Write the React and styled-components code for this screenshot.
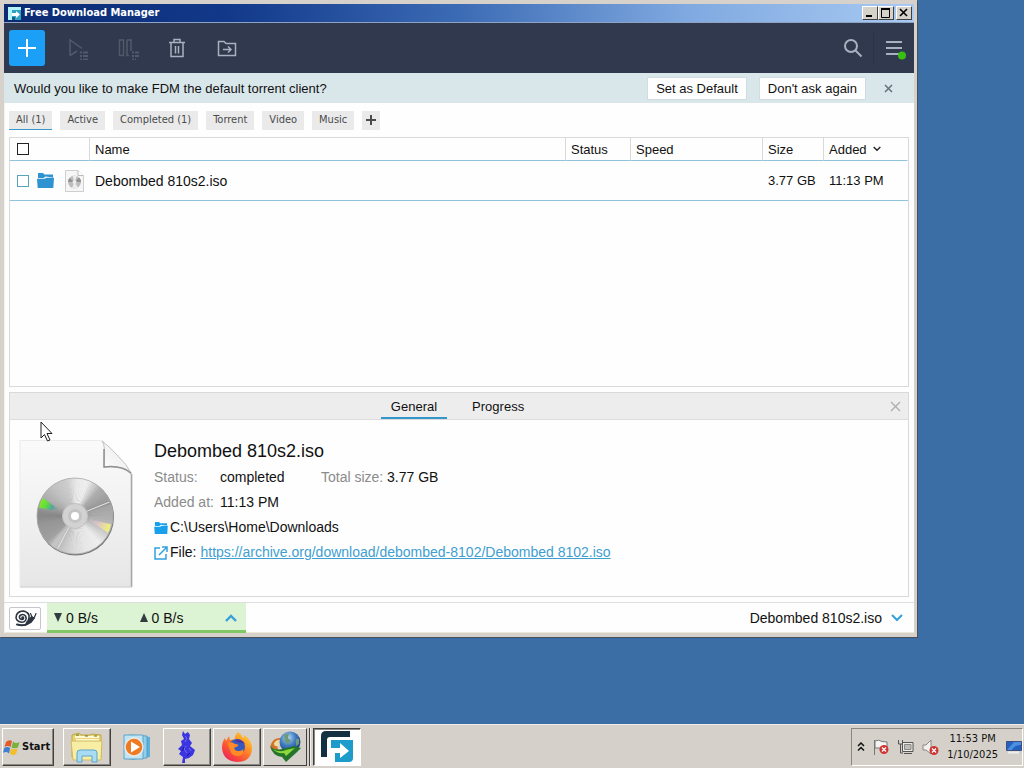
import React from "react";
import styled, { createGlobalStyle, css } from "styled-components";

const UI = `"Liberation Sans", Arial, sans-serif`;
const SYS = `"DejaVu Sans Condensed", "DejaVu Sans", Tahoma, sans-serif`;

const Global = createGlobalStyle`
  * { box-sizing: border-box; }
  body { margin: 0; font-family: ${UI}; font-size: 14px; color: #111; }
  button { font: inherit; color: inherit; margin: 0; padding: 0; border: 0; background: none; }
  svg { display: block; flex: none; }
`;

/* ---------- desktop and window frame ---------- */

const Desktop = styled.div`
  position: relative;
  min-height: 100vh;
  display: flex;
  flex-direction: column;
  background: #3a6ea5;
`;
const Workspace = styled.main`
  flex: 1;
  display: flex;
  padding: 0 107px 87px 0;
`;
const Window = styled.section`
  flex: 1;
  min-width: 0;
  display: flex;
  flex-direction: column;
  background: #fefefe;
  border: solid #d6d2cb;
  border-width: 4px 3px 4px 4px;
  box-shadow: inset 1px 0 0 #f4f2ee, inset 0 -1px 0 #ece9d8, 1px 1px 0 #4a4f5a;
`;
const TitleBar = styled.header`
  display: flex;
  align-items: center;
  height: 19px;
  padding: 0 2px 0 4px;
  gap: 3px;
  border-bottom: 1px solid #8fa3c4;
  background: linear-gradient(90deg, #0b2a72 0%, #12398a 25%, #3c6bb5 50%, #7fa9e0 75%, #a8c9f2 100%);
  color: #fff;
  font: bold 11px/18px ${SYS};
`;
const Title = styled.h1`
  flex: 1;
  margin: 0;
  font: inherit;
`;
const WinButtons = styled.div`
  display: flex;
`;
const WinButton = styled.button`
  width: 16px;
  height: 14px;
  display: grid;
  place-items: center;
  background: #d6d2ca;
  border: 1px solid;
  border-color: #fff #404040 #404040 #fff;
  margin-left: ${(p) => (p.$apart ? 2 : 0)}px;
`;

/* ---------- toolbar ---------- */

const Toolbar = styled.nav`
  display: flex;
  align-items: center;
  gap: 14px;
  height: 50px;
  padding: 0 2px 0 5px;
  background: #30394d;
  color: #a9b0bf;
`;
const ToolButton = styled.button`
  width: 36px;
  height: 36px;
  display: grid;
  place-items: center;
  border-radius: 3px;
  ${(p) => p.$primary && css`background: #1c9ff7; color: #fff;`}
  ${(p) => p.$off && css`color: #515a6c;`}
`;
const Spacer = styled.div`
  flex: 1;
`;
const MenuGroup = styled.div`
  display: flex;
  align-items: center;
  gap: 2px;
`;
const Divider = styled.div`
  width: 1px;
  height: 32px;
  background: #2b3447;
`;

/* ---------- notice ---------- */

const Notice = styled.div`
  display: flex;
  align-items: center;
  gap: 12px;
  height: 30px;
  padding: 0 16px 0 10px;
  background: #d9e7eb;
`;
const NoticeText = styled.span`
  flex: 1;
  font-size: 13px;
`;
const NoticeButton = styled.button`
  height: 23px;
  padding: 0 8px;
  background: #fefefe;
  border: 1px solid #cfdde1;
  font-size: 13px;
`;
const CloseButton = styled.button`
  width: 20px;
  height: 20px;
  display: grid;
  place-items: center;
  color: ${(p) => p.$tone};
`;

/* ---------- filters ---------- */

const Body = styled.div`
  flex: 1;
  display: flex;
  flex-direction: column;
  padding: 0 5px;
`;
const Filters = styled.div`
  display: flex;
  gap: 8px;
  height: 34px;
  padding-top: 8px;
`;
const Chip = styled.button`
  height: 19px;
  padding: 0 7px;
  background: #eaeaea;
  color: #4a4a4a;
  font: 11px/18px ${SYS};
  border-bottom: 1px solid ${(p) => (p.$active ? "#3a97cc" : "#eaeaea")};
`;
const AddChip = styled(Chip)`
  width: 18px;
  padding: 0;
  display: grid;
  place-items: center;
`;

/* ---------- list ---------- */

const ListBox = styled.div`
  flex: 1;
  border: 1px solid #d9d9d9;
`;
const Table = styled.table`
  width: 100%;
  table-layout: fixed;
  border-collapse: separate;
  border-spacing: 0;
  font-size: 13px;
`;
const Col = styled.col`
  width: ${(p) => p.$w};
`;
const Th = styled.th`
  height: 23px;
  padding: 0 0 0 5px;
  font-weight: normal;
  text-align: left;
  border-right: 1px solid ${(p) => (p.$last ? "transparent" : "#d9d9d9")};
  border-bottom: 1px solid #8fc4dc;
`;
const Td = styled.td`
  height: 40px;
  padding: 0 0 0 5px;
  border-bottom: 1px solid #8fc4dc;
  ${(p) => p.$name && css`font-size: 14px;`}
`;
const CellFlex = styled.div`
  display: flex;
  align-items: center;
  gap: ${(p) => p.$gap || 0}px;
  padding-left: ${(p) => (p.$lead ? 2 : 0)}px;
`;
const IconPair = styled.span`
  display: flex;
  align-items: center;
  gap: 11px;
`;
const Check = styled.input`
  appearance: none;
  width: 12px;
  height: 12px;
  margin: 0;
  background: #fff;
  border: 1px solid ${(p) => p.$tone};
`;

/* ---------- details ---------- */

const Details = styled.section`
  margin: 5px 0;
  border: 1px solid #d9d9d9;
`;
const Tabs = styled.div`
  display: grid;
  grid-template-columns: 1fr auto 1fr;
  align-items: center;
  height: 27px;
  padding-right: 3px;
  background: #ededed;
  border-bottom: 1px solid #dcdcdc;
`;
const TabList = styled.div`
  grid-column: 2;
  display: flex;
  gap: 15px;
`;
const Tab = styled.button`
  height: 26px;
  padding: 2px 10px 0;
  font-size: 13px;
  border-bottom: 2px solid ${(p) => (p.$active ? "#3496cb" : "transparent")};
`;
const TabEnd = styled.div`
  display: flex;
  justify-content: flex-end;
`;
const DetailBody = styled.div`
  display: flex;
  gap: 21px;
  padding: 20px 9px 8px;
`;
const Heading = styled.h2`
  margin: 0 0 3px;
  font-size: 18px;
  line-height: 22px;
  font-weight: normal;
`;
const Facts = styled.dl`
  display: grid;
  grid-template-columns: 66px 101px 66px auto;
  margin: 0;
  line-height: 25px;
  white-space: nowrap;
`;
const Term = styled.dt`
  color: #8b8b8b;
`;
const Value = styled.dd`
  margin: 0;
`;
const Line = styled.p`
  display: flex;
  align-items: center;
  gap: 2px;
  margin: 0;
  line-height: 25px;
`;
const FileLink = styled.a`
  margin-left: 2px;
  color: #3f9fd0;
`;

/* ---------- status bar ---------- */

const StatusBar = styled.footer`
  display: flex;
  align-items: center;
  height: 31px;
  padding: 0 11px 0 5px;
  gap: 6px;
  border-top: 1px solid #dedede;
`;
const SnailButton = styled.button`
  width: 32px;
  height: 23px;
  display: grid;
  place-items: center;
  border: 1px solid #c4c6cc;
  border-radius: 2px;
`;
const SpeedBox = styled.div`
  display: flex;
  align-items: center;
  width: 199px;
  height: 30px;
  padding: 2px 9px 0 7px;
  background: #dcf3d4;
  border-bottom: 3px solid #80c866;
`;
const Speed = styled.span`
  display: flex;
  align-items: center;
  gap: 4px;
  width: 87px;
`;
const CurrentFile = styled.button`
  display: flex;
  align-items: center;
  gap: 9px;
`;

/* ---------- taskbar ---------- */

const Taskbar = styled.footer`
  display: flex;
  align-items: center;
  height: 44px;
  padding: 1px 1px 0 2px;
  background: #d5d1ca;
  border-top: 1px solid #efede8;
  font: 11px/16px ${SYS};
`;
const TaskItem = styled.button`
  width: 48px;
  height: 38px;
  display: grid;
  place-items: center;
  margin-right: 2px;
  border: 1px solid transparent;
  ${(p) =>
    p.$state === "open" &&
    css`
      border-color: #fff #404040 #404040 #fff;
      box-shadow: inset -1px -1px 0 #8a8780;
    `}
  ${(p) =>
    p.$state === "stack" &&
    css`
      width: 44px;
      margin-right: 6px;
      border-color: #fff #404040 #404040 #fff;
      box-shadow: 2px 0 0 #d5d1ca, 3px 0 0 #404040, 4px 0 0 #f4f2ee;
    `}
  ${(p) =>
    p.$state === "current" &&
    css`
      background: #fefefe;
      border-color: #404040 #fff #fff #404040;
      box-shadow: inset 1px 1px 0 #8a8780;
    `}
`;
const StartButton = styled(TaskItem)`
  width: 52px;
  margin-right: 9px;
  display: flex;
  align-items: center;
  gap: 2px;
  font-weight: bold;
`;
const Tray = styled.div`
  display: flex;
  align-items: center;
  height: 38px;
  padding: 0 0 0 5px;
  gap: 8px;
  border: 1px solid;
  border-color: #8a8780 #fff #fff #8a8780;
`;
const Clock = styled.time`
  text-align: center;
`;
const Pointer = styled.svg`
  position: absolute;
  left: 40px;
  top: 421px;
`;

/* ---------- drawings ---------- */

const discStops = [
  [0, 232], [18, 240], [40, 175], [68, 150], [72, 165], [95, 178], [115, 200],
  [135, 238], [160, 232], [185, 214], [205, 190], [215, 200], [225, 160],
  [255, 150], [270, 135], [300, 176], [325, 196], [345, 205], [360, 232],
];
const shade = (a) => {
  const i = discStops.findIndex((s) => s[0] > a);
  const [a0, v0] = discStops[i - 1];
  const [a1, v1] = discStops[i];
  return Math.round(v0 + ((v1 - v0) * (a - a0)) / (a1 - a0));
};
const rim = (a, r) => {
  const t = ((a - 90) * Math.PI) / 180;
  return `${(56 + r * Math.cos(t)).toFixed(2)} ${(76 + r * Math.sin(t)).toFixed(2)}`;
};
const wedges = Array.from({ length: 90 }, (_, k) => {
  const v = shade(k * 4);
  return { k, d: `M56 76L${rim(k * 4, 38)}A38 38 0 0 1 ${rim(k * 4 + 5, 38)}Z`, fill: `rgb(${v},${v},${v})` };
});

function DiscFile({ width, height, id }) {
  return (
    <svg width={width} height={height} viewBox="0 0 114 148" aria-hidden="true">
      <defs>
        <linearGradient id={id + "p"} x1="0" y1="0" x2="0" y2="1">
          <stop offset="0" stopColor="#fafafa" />
          <stop offset="0.5" stopColor="#f1f1f1" />
          <stop offset="1" stopColor="#e6e6e6" />
        </linearGradient>
        <linearGradient id={id + "f"} x1="0" y1="1" x2="1" y2="0">
          <stop offset="0" stopColor="#fff" />
          <stop offset="0.6" stopColor="#f0f0f0" />
          <stop offset="1" stopColor="#c4c4c4" />
        </linearGradient>
        <linearGradient id={id + "g"} x1="0" y1="0" x2="1" y2="0.3">
          <stop offset="0" stopColor="#8df01c" />
          <stop offset="0.4" stopColor="#62dd3a" />
          <stop offset="0.7" stopColor="#4fa6a0" />
          <stop offset="1" stopColor="#9a9a9a" stopOpacity="0" />
        </linearGradient>
        <linearGradient id={id + "y"} x1="0" y1="0" x2="1" y2="0.3">
          <stop offset="0" stopColor="#c8c4c4" stopOpacity="0" />
          <stop offset="0.5" stopColor="#dfc5c8" />
          <stop offset="1" stopColor="#eeee80" />
        </linearGradient>
      </defs>
      <path d="M1 .5H82Q86 1 86 6L86 27H106Q113 29 113 37V147H1Z" fill={`url(#${id}p)`} stroke="#ebebeb" />
      <path d="M112.500 34V147" stroke="#a6a6a6" strokeWidth="1.500" />
      <path d="M1 147H113" stroke="#cfcfcf" />
      <path d="M83 1Q87 5 85 27Q104 25 113 35Q108 24 99 16Q90 6 83 1Z" fill={`url(#${id}f)`} stroke="#b5b5b5" strokeWidth=".8" />
      <path d="M85 9V27Q103 25 112 33" fill="none" stroke="#909090" strokeWidth="1.500" />
      <circle cx="56.500" cy="77" r="38.500" fill="#777" />
      {wedges.map((w) => <path key={w.k} d={w.d} fill={w.fill} />)}
      <path d={`M${rim(288, 13)}L${rim(283, 37)}A37 37 0 0 1 ${rim(299, 37)}Z`} fill={`url(#${id}g)`} />
      <path d={`M${rim(104, 13)}L${rim(103, 37)}A37 37 0 0 1 ${rim(117, 37)}Z`} fill={`url(#${id}y)`} />
      <path d={`M56 76L${rim(68, 37)}M56 76L${rim(208, 37)}`} stroke="#e6e6e6" />
      <circle cx="56" cy="76" r="38" fill="none" stroke="#aaa" strokeWidth=".8" />
      <circle cx="56" cy="76" r="12.500" fill="#d2d2d2" stroke="#c2c2c2" />
      <circle cx="56" cy="76" r="7" fill="#c4c4c4" />
      <circle cx="56" cy="76" r="4" fill="#fff" />
    </svg>
  );
}

function SmallDisc() {
  return (
    <svg width="19" height="22" viewBox="0 0 19 22" aria-hidden="true">
      <path d="M.5.500H13L18.500 6V21.500H.500Z" fill="#f6f6f6" stroke="#cfcfcf" />
      <path d="M13 .500V5.500H18.500" fill="#fff" stroke="#bbb" />
      <circle cx="9.500" cy="12" r="6.500" fill="#bdbdbd" />
      <path d="M9.500 12L7.500 5.800A6.500 6.500 0 0 1 12 6ZM9.500 12L13 17.500A6.500 6.500 0 0 1 7 18Z" fill="#ececec" />
      <path d="M9.500 12L3 12A6.500 6.500 0 0 1 4.500 8ZM9.500 12L16 12A6.500 6.500 0 0 0 14 7.500Z" fill="#929292" />
      <circle cx="9.500" cy="12" r="2" fill="#eee" />
    </svg>
  );
}

function Folder({ width, height, color }) {
  return (
    <svg width={width} height={height} viewBox="0 0 17 15" aria-hidden="true">
      <path d="M1 0H6L7.500 1.500H16V4.500L8.500 3.500L6.500 5H1Z" fill={color} />
      <path d="M0 5.800H7.500L9.500 4.700H17L16.300 15H.700Z" fill={color} />
    </svg>
  );
}

const Stroke = ({ size = 20, w = 1.5, children, ...rest }) => (
  <svg width={size} height={size} viewBox={`0 0 ${size} ${size}`} fill="none" stroke="currentColor" strokeWidth={w} aria-hidden="true" {...rest}>
    {children}
  </svg>
);

const PlusIcon = () => <Stroke w={2}><path d="M10 1V19M1 10H19" /></Stroke>;
const StartAll = () => (
  <Stroke size={24}>
    <path d="M5 19.500V4L17 12.500M5 19.500L12 15" />
    <path d="M15 16.500H23M15 20H23M15 23.500H23" strokeWidth="2" strokeDasharray="2 1 5" />
  </Stroke>
);
const PauseAll = () => (
  <Stroke size={24}>
    <path d="M4.500 4H8.500V19.500H4.500ZM12 4H16V15M12 4V19.500H14" />
    <path d="M17 16.500H24M17 20H24M17 23.500H21" strokeWidth="2" strokeDasharray="2 1 4" />
  </Stroke>
);
const Trash = () => (
  <Stroke>
    <path d="M2 4.500H18M7 4V1.500H13V4M4 5V18.500H16V5M8.500 8V15.500M11.500 8V15.500" />
  </Stroke>
);
const MoveFolder = () => (
  <Stroke>
    <path d="M1.500 17.500V3.500H7L9 5.500H18.500V17.500ZM6 11.500H13M11 8.500L14 11.500L11 14.500" />
  </Stroke>
);
const Search = () => <Stroke w={2}><circle cx="8" cy="8" r="6" /><path d="M12.500 12.500L18.500 18.500" /></Stroke>;
const Menu = () => (
  <Stroke size={24} w={2}>
    <path d="M4 6H20M4 12H20M4 18H17" />
    <circle cx="20" cy="19.500" r="4" fill="#38bf12" stroke="none" />
  </Stroke>
);
const Cross = ({ size, w }) => <Stroke size={size} w={w}><path d={`M1 1L${size - 1} ${size - 1}M${size - 1} 1L1 ${size - 1}`} /></Stroke>;
const Chevron = ({ up, size = 12, w = 2, color = "#35a0dc" }) => (
  <svg width={size} height={size} viewBox="0 0 12 12" fill="none" stroke={color} strokeWidth={w} aria-hidden="true">
    <path d={up ? "M1 9L6 4L11 9" : "M1 3L6 8L11 3"} />
  </svg>
);
const Triangle = ({ up }) => (
  <svg width="8" height="9" viewBox="0 0 8 9" aria-hidden="true">
    <path d={up ? "M0 9H8L4 0Z" : "M0 0H8L4 9Z"} fill="#333d40" />
  </svg>
);
const External = () => (
  <Stroke size={14} color="#2fa2df">
    <path d="M6 2H1V13H12V8M8 1H13V6M13 1L5 9" />
  </Stroke>
);
const Snail = () => (
  <svg width="24" height="18" viewBox="0 0 24 18" fill="none" stroke="#2b3440" strokeWidth="1.600" strokeLinecap="round" aria-hidden="true">
    <path d="M9 9C9 7.500 11 8 10.500 9.500C10 11 7 11 6.500 8.500C6 5.500 10.500 4.500 12.500 7C14.500 10 12 13.500 8.500 13.300C4.500 13 2 10 3.500 6C5 2 11 1 14 3.500C16 5 16.500 8 15.500 10.500" />
    <path d="M4 15.500C8 16.500 12 16.500 15 14.500C18 12.500 18.500 10 20.500 9" strokeWidth="2" />
    <path d="M14 13L18.500 8L21 9L18 13L13 15.500Z" fill="#2b3440" />
    <path d="M19 8L17.500 4.500M21.500 8L23 4.500" strokeWidth="1.200" />
  </svg>
);
const FdmLogo = () => (
  <svg width="32" height="32" viewBox="0 0 32 32" aria-hidden="true">
    <path d="M5 0H29V6H9Q6 6 6 9V26H0V5Q0 0 5 0Z" fill="#12303f" />
    <path d="M10 9H32V27Q32 31 28 31H10Z" fill="#1d9ccc" />
    <path d="M10 17H19V12L28 20L19 27V22H14V31H10Z" fill="#fff" />
  </svg>
);
const TitleLogo = () => (
  <svg width="13" height="13" viewBox="0 0 13 13" aria-hidden="true">
    <path d="M0 0H13V13H0Z" fill="#2fa3c4" />
    <path d="M0 0H13V3H4V13H0Z" fill="#b5f3fa" />
    <path d="M4 6H8V4L12 7.500L8 11V9H4Z" fill="#fff" />
    <path d="M4 10H7V13H4Z" fill="#145d86" />
  </svg>
);
const WinFlag = () => (
  <svg width="17" height="17" viewBox="0 0 17 17" aria-hidden="true">
    <path d="M3 3Q6 0 9 2L7.500 8Q5 6 1.500 8Z" fill="#e2592c" />
    <path d="M10 2.500Q12 5 16.500 3L15 8.500Q11 10 8.500 8.300Z" fill="#79b13c" />
    <path d="M1.200 9Q4 7 7.200 9L6 14.500Q3 12 0 14Z" fill="#3f7fd0" />
    <path d="M8 9.500Q11 11 14.700 9.500L13 15Q9 17 6.800 14.500Z" fill="#f3bd2c" />
  </svg>
);
const ExplorerIcon = () => (
  <svg width="34" height="32" viewBox="0 0 34 32" aria-hidden="true">
    <path d="M2 4L9 2L11 4H20L22 3L31 4V26H2Z" fill="#e9d374" stroke="#c0a545" />
    <path d="M5 6H29M6 9H29" stroke="#fff8d0" strokeWidth="2" />
    <path d="M1 10H32L31 29H3Z" fill="#f7eda5" stroke="#d2bb5c" />
    <path d="M7 31V22Q7 19 10 19H24Q27 19 27 22V31H22V25H12V31Z" fill="#a9dcf2" stroke="#5aa6cf" />
    <path d="M6 4H9M15 5H18M24 5H27" stroke="#4b7a3a" />
  </svg>
);
const PlayerIcon = () => (
  <svg width="30" height="28" viewBox="0 0 30 28" aria-hidden="true">
    <path d="M10 2L28 4V24L10 27Z" fill="#5fb0da" />
    <path d="M7 2L25 3V25L7 26Z" fill="#93cfea" stroke="#3f8dbd" strokeWidth=".7" />
    <path d="M2 2H21V26H2Z" fill="#c2e4f2" stroke="#58a4cb" />
    <circle cx="12" cy="14" r="9" fill="#ee7a22" stroke="#e8e8e8" strokeWidth="1.500" />
    <path d="M9 8.500L18 14L9 19.500Z" fill="#fff" />
  </svg>
);
const SpriteIcon = () => (
  <svg width="20" height="32" viewBox="0 0 20 32" aria-hidden="true">
    <path d="M6 0L8 3L11 1L13 4L12 8L15 12L13 15L18 19L16 24L12 27L8 28V32H5L6 26L2 23L4 20L1 18L5 14L4 10L7 8L5 4Z" fill="#3a35e0" />
    <path d="M8 5L10 7L8 11M9 15L7 18L10 22M12 17L14 20" stroke="#7370f0" fill="none" />
    <path d="M7 16L5 20M13 22L10 25" stroke="#1a158e" fill="none" />
  </svg>
);
const FirefoxIcon = () => (
  <svg width="32" height="32" viewBox="0 0 32 32" aria-hidden="true">
    <defs>
      <linearGradient id="fx" x1="1" y1="0" x2="0.200" y2="1">
        <stop offset="0" stopColor="#ffe13a" />
        <stop offset="0.400" stopColor="#ff9524" />
        <stop offset="0.750" stopColor="#fb4b38" />
        <stop offset="1" stopColor="#e62263" />
      </linearGradient>
    </defs>
    <path d="M17 1Q21 4 22 7Q24 6 23 4Q31 9 31 18Q30 31 16 31Q2 30 1 17Q1 11 4 7L5 10L8 5L9 9Q12 8 14 9Q13 5 17 1Z" fill="url(#fx)" />
    <circle cx="16" cy="16" r="8" fill="#3559bd" />
    <path d="M7 12Q11 10 14 13Q18 13 17 15L13 17Q14 20 17 20Q21 20 22 18Q24 24 17 25Q9 26 7 12Z" fill="#ff8a26" />
    <path d="M14 9Q20 7 24 13Q21 11 19 12Q16 12 14 9Z" fill="#51349e" />
  </svg>
);
const IdmIcon = () => (
  <svg width="34" height="32" viewBox="0 0 34 32" aria-hidden="true">
    <defs>
      <radialGradient id="globe" cx="0.400" cy="0.300" r="0.700">
        <stop offset="0" stopColor="#b7dcf5" />
        <stop offset="0.500" stopColor="#4580c4" />
        <stop offset="1" stopColor="#1d3f80" />
      </radialGradient>
    </defs>
    <path d="M3 13Q6 6 13 7L10 13Q8 17 12 21L7 22Q1 19 3 13Z" fill="#d0742c" />
    <path d="M6 12Q9 8 13 9L10 15Q6 16 6 12Z" fill="#f0dc9a" />
    <circle cx="22" cy="11" r="10.500" fill="url(#globe)" />
    <path d="M16 4L21 2L20 7L23 10L20 13L17 11ZM28 8L31 8L31 13L28 15Z" fill="#6f9a78" />
    <path d="M2 14Q5 20 14 18L26 15L33 17L28 22L18 31L14 26Q4 25 2 14Z" fill="#23752b" />
    <path d="M5 18Q11 22 18 19L27 17L18 25L16 22Q9 23 5 18Z" fill="#8ed83a" />
  </svg>
);
const Badge = ({ x, y }) => (
  <g>
    <circle cx={x} cy={y} r="4.500" fill="#cf3532" />
    <path d={`M${x - 2} ${y - 2}L${x + 2} ${y + 2}M${x + 2} ${y - 2}L${x - 2} ${y + 2}`} stroke="#fff" strokeWidth="1.300" />
  </g>
);
const FlagTray = () => (
  <svg width="16" height="16" viewBox="0 0 16 16" aria-hidden="true">
    <path d="M1.500 1V16" stroke="#777" />
    <path d="M2 2Q6 0 9 2.500L14 3V10Q9 11 7 9L2 9Z" fill="#f5f4f1" stroke="#777" />
    <Badge x={11} y={10.5} />
  </svg>
);
const NetTray = () => (
  <svg width="17" height="16" viewBox="0 0 17 16" aria-hidden="true">
    <path d="M5.500 3.500H16V12.500H5.500Z" fill="#ecebe7" stroke="#555" />
    <path d="M7.500 5.500H14V10.500H7.500Z" fill="#bebcb7" stroke="#888" />
    <path d="M7 14.500H15M1.500 1V5H5.500V1M3.500 5V14H6" fill="none" stroke="#555" />
  </svg>
);
const SoundTray = () => (
  <svg width="17" height="17" viewBox="0 0 17 17" aria-hidden="true">
    <path d="M1 6H4L9 1V15L4 11H1Z" fill="#f2f1ee" stroke="#888" />
    <Badge x={12} y={11.5} />
  </svg>
);
const MonitorTray = () => (
  <svg width="16" height="13" viewBox="0 0 16 13" aria-hidden="true">
    <path d="M.5.500H15.500V9.500H.500Z" fill="#2360c0" stroke="#3a4f80" />
    <path d="M1 9L8 1H15V4Q8 4 6 9Z" fill="#4c8ee0" />
    <path d="M2 11.500H13" stroke="#eee" strokeWidth="2" />
  </svg>
);

/* ---------- data ---------- */

const filters = ["All (1)", "Active", "Completed (1)", "Torrent", "Video", "Music"];
const columns = ["Name", "Status", "Speed", "Size"];
const tasks = [
  { name: "Windows Explorer", state: "open", icon: <ExplorerIcon /> },
  { name: "Windows Media Player", state: "idle", icon: <PlayerIcon /> },
  { name: "Sprite", state: "open", icon: <SpriteIcon /> },
  { name: "Firefox", state: "open", icon: <FirefoxIcon /> },
  { name: "Internet Download Manager", state: "stack", icon: <IdmIcon /> },
  { name: "Free Download Manager", state: "current", icon: <FdmLogo /> },
];

export default function App() {
  return (
    <Desktop>
      <Global />
      <Workspace>
        <Window>
          <TitleBar>
            <TitleLogo />
            <Title>Free Download Manager</Title>
            <WinButtons>
              <WinButton aria-label="Minimize"><svg width="10" height="10"><path d="M1 8H7" stroke="#000" strokeWidth="2" /></svg></WinButton>
              <WinButton aria-label="Maximize"><svg width="10" height="10"><path d="M.500 1.500H9M.500 1V9.500H8.500V1" fill="none" stroke="#000" /><path d="M0 1H9" stroke="#000" strokeWidth="2" /></svg></WinButton>
              <WinButton aria-label="Close" $apart><svg width="10" height="10"><path d="M1 1L8 8M8 1L1 8" stroke="#000" strokeWidth="1.600" /></svg></WinButton>
            </WinButtons>
          </TitleBar>

          <Toolbar>
            <ToolButton $primary aria-label="Add download"><PlusIcon /></ToolButton>
            <ToolButton $off aria-label="Start all"><StartAll /></ToolButton>
            <ToolButton $off aria-label="Pause all"><PauseAll /></ToolButton>
            <ToolButton aria-label="Delete"><Trash /></ToolButton>
            <ToolButton aria-label="Move to folder"><MoveFolder /></ToolButton>
            <Spacer />
            <MenuGroup>
              <ToolButton aria-label="Search"><Search /></ToolButton>
              <Divider />
              <ToolButton aria-label="Menu"><Menu /></ToolButton>
            </MenuGroup>
          </Toolbar>

          <Notice>
            <NoticeText>Would you like to make FDM the default torrent client?</NoticeText>
            <NoticeButton>Set as Default</NoticeButton>
            <NoticeButton>Don't ask again</NoticeButton>
            <CloseButton $tone="#64767c" aria-label="Dismiss"><Cross size={9} w={1.6} /></CloseButton>
          </Notice>

          <Body>
            <Filters>
              {filters.map((f, i) => <Chip key={f} $active={i === 0}>{f}</Chip>)}
              <AddChip aria-label="Add tag"><Stroke size={10} w={2}><path d="M5 0V10M0 5H10" /></Stroke></AddChip>
            </Filters>

            <ListBox>
              <Table>
                <colgroup>
                  <Col $w="80px" /><Col $w="auto" /><Col $w="65px" /><Col $w="132px" /><Col $w="61px" /><Col $w="84px" />
                </colgroup>
                <thead>
                  <tr>
                    <Th><CellFlex $lead><Check type="checkbox" $tone="#222" aria-label="Select all" /></CellFlex></Th>
                    {columns.map((c) => <Th key={c}>{c}</Th>)}
                    <Th $last><CellFlex $gap={6}>Added <Chevron size={8} w={2} color="#222" /></CellFlex></Th>
                  </tr>
                </thead>
                <tbody>
                  <tr>
                    <Td>
                      <CellFlex $lead $gap={8}>
                        <Check type="checkbox" $tone="#56a5bd" aria-label="Select Debombed 810s2.iso" />
                        <IconPair><Folder width="17" height="15" color="#2f93d2" /><SmallDisc /></IconPair>
                      </CellFlex>
                    </Td>
                    <Td $name>Debombed 810s2.iso</Td>
                    <Td />
                    <Td />
                    <Td>3.77 GB</Td>
                    <Td>11:13 PM</Td>
                  </tr>
                </tbody>
              </Table>
            </ListBox>

            <Details>
              <Tabs>
                <TabList role="tablist">
                  <Tab role="tab" aria-selected="true" $active>General</Tab>
                  <Tab role="tab" aria-selected="false">Progress</Tab>
                </TabList>
                <TabEnd><CloseButton $tone="#adadad" aria-label="Close details"><Cross size={11} w={1.3} /></CloseButton></TabEnd>
              </Tabs>
              <DetailBody>
                <DiscFile width="114" height="148" id="big" />
                <div>
                  <Heading>Debombed 810s2.iso</Heading>
                  <Facts>
                    <Term>Status:</Term><Value>completed</Value>
                    <Term>Total size:</Term><Value>3.77 GB</Value>
                    <Term>Added at:</Term><Value>11:13 PM</Value>
                  </Facts>
                  <Line><Folder width="14" height="12" color="#18a0ea" />C:\Users\Home\Downloads</Line>
                  <Line>
                    <External />File:{" "}
                    <FileLink href="https://archive.org/download/debombed-8102/Debombed 8102.iso">
                      https://archive.org/download/debombed-8102/Debombed 8102.iso
                    </FileLink>
                  </Line>
                </div>
              </DetailBody>
            </Details>
          </Body>

          <StatusBar>
            <SnailButton aria-label="Snail mode"><Snail /></SnailButton>
            <SpeedBox>
              <Speed><Triangle />0 B/s</Speed>
              <Speed><Triangle up />0 B/s</Speed>
              <Spacer />
              <Chevron up w={2.4} />
            </SpeedBox>
            <Spacer />
            <CurrentFile>Debombed 810s2.iso <Chevron w={2} /></CurrentFile>
          </StatusBar>
        </Window>
      </Workspace>

      <Taskbar>
        <StartButton $state="open"><WinFlag />Start</StartButton>
        {tasks.map((t) => <TaskItem key={t.name} $state={t.state} aria-label={t.name}>{t.icon}</TaskItem>)}
        <Spacer />
        <Tray>
          <svg width="8" height="10" viewBox="0 0 8 10" fill="none" stroke="#111" strokeWidth="1.500" aria-hidden="true"><path d="M1 4L4 1L7 4M1 8.500L4 5.500L7 8.500" /></svg>
          <FlagTray />
          <NetTray />
          <SoundTray />
          <Clock>11:53 PM<br />1/10/2025</Clock>
          <MonitorTray />
        </Tray>
      </Taskbar>

      <Pointer width="13" height="21" viewBox="0 0 13 21" aria-hidden="true">
        <path d="M1 1V17L4.500 13.500L7.500 20L10 19L7 12.500H12Z" fill="#fff" stroke="#222" />
      </Pointer>
    </Desktop>
  );
}
